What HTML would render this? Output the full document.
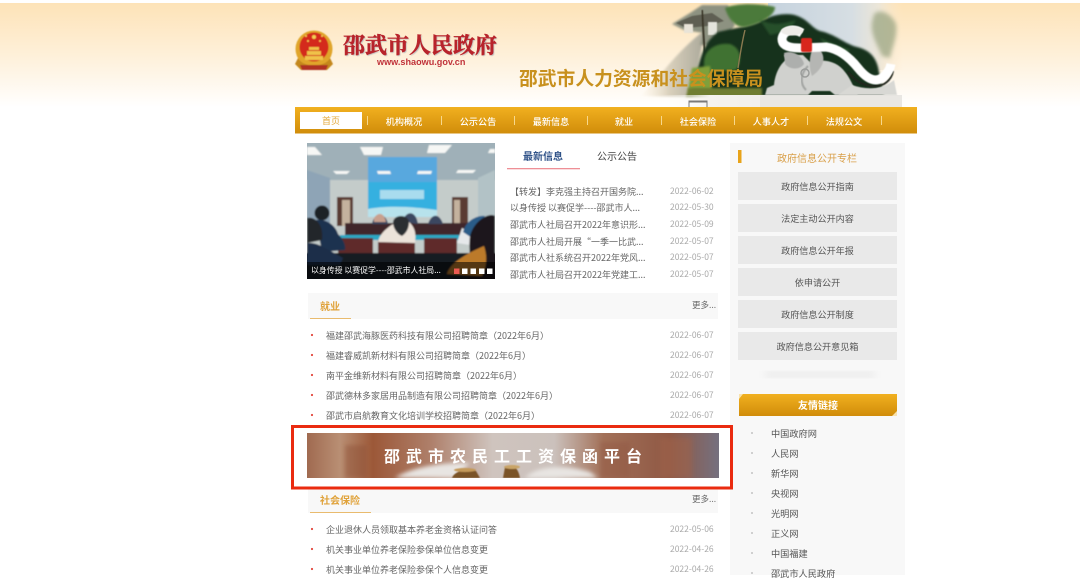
<!DOCTYPE html>
<html lang="zh-CN">
<head>
<meta charset="utf-8">
<title>邵武市人力资源和社会保障局</title>
<style>
html,body{margin:0;padding:0;background:#fff}
body{width:1080px;height:575px;overflow:hidden;position:relative;font-family:"Liberation Sans","Noto Sans CJK SC",sans-serif;color:#666;filter:blur(.3px)}
.t{position:absolute;white-space:nowrap;line-height:12px;font-size:9px;font-family:"Noto Sans CJK SC","Liberation Sans",sans-serif}
.l{margin-top:1px}
.c{transform:translateX(-50%)}
.d{color:#aaa;font-size:8.5px;left:670px}
.n{color:#fff;font-size:9.1px;font-weight:500}
.g{color:#555;font-size:9.2px}
.b{position:absolute;left:738px;width:159px;height:28px;background:#e9e9e9;line-height:28px;text-align:center;font-size:9.1px;color:#555;font-family:"Noto Sans CJK SC",sans-serif}
svg{position:absolute;left:0;top:0}
</style>
</head>
<body>
<svg width="1080" height="575" viewBox="0 0 1080 575">
<defs>
<linearGradient id="hd" x1="0" y1="0" x2="0" y2="1"><stop offset="0" stop-color="#fde3b8"/><stop offset=".5" stop-color="#fef0d9"/><stop offset="1" stop-color="#fff"/></linearGradient>
<linearGradient id="nav" x1="0" y1="0" x2="0" y2="1"><stop offset="0" stop-color="#f1b01f"/><stop offset="1" stop-color="#d08c0a"/></linearGradient>
<linearGradient id="sky" x1="0" y1="0" x2="1" y2="0"><stop offset="0" stop-color="#c6d3de"/><stop offset=".62" stop-color="#d6dee3"/><stop offset=".82" stop-color="#ece6d8"/><stop offset="1" stop-color="#fde8c8" stop-opacity="0"/></linearGradient>
<linearGradient id="stp" x1="0" y1="0" x2="1" y2="0"><stop offset="0" stop-color="#f6e6cc" stop-opacity="0"/><stop offset=".45" stop-color="#d9d0bc"/><stop offset="1" stop-color="#aaa89a"/></linearGradient>
<linearGradient id="pl" x1="0" y1="0" x2="1" y2="0"><stop offset="0" stop-color="#fff" stop-opacity="0"/><stop offset=".2" stop-color="#f5f3ef"/><stop offset=".9" stop-color="#ebe9e5"/><stop offset="1" stop-color="#fff" stop-opacity="0"/></linearGradient>
<linearGradient id="ban" x1="0" y1="0" x2="1" y2="0">
<stop offset="0" stop-color="#a06a50"/><stop offset=".08" stop-color="#b98f74"/><stop offset=".16" stop-color="#9c5838"/><stop offset=".3" stop-color="#ae7f6a"/><stop offset=".45" stop-color="#cfc4be"/><stop offset=".6" stop-color="#cbc1bc"/><stop offset=".72" stop-color="#a27058"/><stop offset=".88" stop-color="#8f5844"/><stop offset="1" stop-color="#75707f"/></linearGradient>
<filter id="bl" x="-20%" y="-20%" width="140%" height="140%"><feGaussianBlur stdDeviation="1"/></filter>
<filter id="bl2" x="-30%" y="-30%" width="160%" height="160%"><feGaussianBlur stdDeviation="2.2"/></filter>
<filter id="bl3" x="-30%" y="-30%" width="160%" height="160%"><feGaussianBlur stdDeviation="4"/></filter>
<filter id="bs" x="-10%" y="-10%" width="120%" height="120%"><feGaussianBlur stdDeviation=".5"/></filter>
<filter id="bm" x="-10%" y="-10%" width="120%" height="120%"><feGaussianBlur stdDeviation=".7"/></filter>
<clipPath id="hc"><rect x="630" y="3" width="290" height="104"/></clipPath>
<clipPath id="pc"><rect x="307" y="143" width="188" height="136"/></clipPath>
<clipPath id="bc"><rect x="307" y="433" width="412" height="45"/></clipPath>
</defs>
<rect x="0" y="3" width="1080" height="104" fill="url(#hd)"/>

<!-- header scene -->
<g clip-path="url(#hc)">
<rect x="768" y="-10" width="135" height="80" fill="url(#sky)"/>
<path d="M640 96C655 84 675 52 705 30L692 97Z" fill="url(#stp)" filter="url(#bl)"/>
<path d="M672 24L690 13L702 5H728L735 25L722 45H700L703 33L684 30Z" fill="#8d9281" filter="url(#bl)"/>
<path d="M676 23L692 16L712 13L724 21L708 26L686 28Z" fill="#5f5f52" filter="url(#bs)"/>
<rect x="684" y="24" width="9" height="9" fill="#e9e4d8" filter="url(#bs)"/>
<rect x="708" y="22" width="9" height="13" fill="#e4e4dc" filter="url(#bs)"/>
<path d="M702 10L705 58" stroke="#3b382c" stroke-width="2" fill="none" filter="url(#bs)"/>
<!-- tree masses -->
<path d="M718 32C735 28 752 26 762 20C775 14 790 12 800 17C810 22 812 28 820 31C835 34 845 44 857 47C870 50 877 58 879 72L884 96H690L700 60C704 46 710 38 718 32Z" fill="#14331c" filter="url(#bl)"/>
<path d="M725 8C735 3 760 3 775 7C775 16 760 24 745 27C735 28 728 18 725 8Z" fill="#4c7a3b" filter="url(#bl)"/>
<path d="M704 62C704 50 716 42 730 44C742 48 742 62 736 70L704 72Z" fill="#3f7230" filter="url(#bl)"/>
<path d="M745 30C742 42 740 55 738 68" stroke="#8a7a50" stroke-width="1.4" fill="none"/>
<path d="M692 68L710 66L712 90H688Z" fill="#7fa03a" filter="url(#bl)"/>
<path d="M688 88H762V97H686Z" fill="#6f7e33" filter="url(#bl)"/>
<path d="M760 20C772 25 780 25 796 20L790 30L770 35Z" fill="#27502c" filter="url(#bl)"/>
<path d="M820 38C832 44 840 46 850 50L842 55L826 46Z" fill="#2e5a30" filter="url(#bl)"/>
<path d="M874 14C880 8 892 14 896 24C898 36 892 48 890 58L882 56C878 46 870 34 872 22Z" fill="#9ba683" opacity=".75" filter="url(#bl2)"/>
<!-- plinth -->
<rect x="660" y="95" width="248" height="12" fill="url(#pl)"/>
<rect x="760" y="95" width="142" height="12" fill="#e9e7e3"/>
<!-- statue -->
<path d="M765 95L767 88L774 85C775 74 780 64 786 60L784 55L803 55L810 62C825 58 838 62 845 72C850 78 852 84 858 95H835L830 91H812L808 95H790Z" fill="#d0d1ce" filter="url(#bs)"/>
<path d="M838 95L852 85C866 90 882 90 894 80L897 95Z" fill="#d8d8d4" filter="url(#bs)"/>
<path d="M784 53C792 50 802 55 804 64C800 70 790 70 785 64Z" fill="#adafad" filter="url(#bs)"/>
<path d="M808 66C800 74 800 84 806 90" stroke="#a3a5a3" stroke-width="2" fill="none" filter="url(#bs)"/>
<path d="M818 48C826 55 826 66 812 76C808 66 810 56 812 50Z" fill="#b5b6b3" filter="url(#bs)"/>
<circle cx="805" cy="73" r="4" fill="none" stroke="#9b9d9b" stroke-width="1.500"/>
<path d="M848 72C858 85 872 89 884 84C889 81 892 77 893 71" stroke="#20261f" stroke-width="2" fill="none" filter="url(#bs)"/>
<path d="M802 33C792 27 783 31 782 39C782 46 790 48 800 48L826 47C840 49 850 58 858 68C866 78 874 83 882 78C887 74 890 70 891 64" stroke="#fff" stroke-width="9" fill="none" filter="url(#bs)"/>
<ellipse cx="792" cy="31" rx="11" ry="4.500" fill="#eeece8" filter="url(#bs)"/>
<rect x="801" y="38" width="11" height="14" rx="2" fill="#d8281e" filter="url(#bs)"/>
</g>
<path d="M689 107V101H707V107M689 102H707" stroke="#444" stroke-width="1" fill="none" opacity=".7"/>

<!-- nav -->
<rect x="295" y="107" width="622" height="26.500" fill="url(#nav)"/>
<rect x="300" y="112" width="62" height="17" fill="#fff"/>
<g fill="#f8d88c"><rect x="367" y="116" width="1" height="9"/><rect x="441" y="116" width="1" height="9"/><rect x="514" y="116" width="1" height="9"/><rect x="587" y="116" width="1" height="9"/><rect x="661" y="116" width="1" height="9"/><rect x="734" y="116" width="1" height="9"/><rect x="807" y="116" width="1" height="9"/><rect x="881" y="116" width="1" height="9"/></g>

<!-- emblem -->
<g filter="url(#bs)">
<circle cx="314" cy="49" r="18.500" fill="#e0a52c"/>
<circle cx="314" cy="47" r="14.500" fill="#d42a1c"/>
<path d="M298 58C303 68 325 68 330 58L333 64L327 70H301L295 64Z" fill="#c4881f"/>
<path d="M300 65H328L326 70H302Z" fill="#b03022"/>
<path d="M305 56H323V60H305ZM307 51H321V55H307ZM309 47H319V50H309Z" fill="#f0c24a"/>
<circle cx="314" cy="37" r="2" fill="#f3cf55"/><circle cx="308" cy="41" r="1" fill="#f3cf55"/><circle cx="320" cy="41" r="1" fill="#f3cf55"/><circle cx="306" cy="36" r="1" fill="#f3cf55"/><circle cx="322" cy="36" r="1" fill="#f3cf55"/>
</g>

<!-- photo -->
<g clip-path="url(#pc)">
<g filter="url(#bm)">
<rect x="300" y="136" width="202" height="150" fill="#c4ccca"/>
<rect x="300" y="136" width="202" height="44" fill="#9fb0b8"/>
<path d="M368 157H437V183H368Z" fill="#58a8de"/>
<path d="M307 170L330 178V226H307Z" fill="#8ea4b6"/>
<path d="M495 170L478 178V226H495Z" fill="#b2c2c6"/>
<path d="M307 147H315L322 155H307ZM360 147H383L381 155H364ZM429 145H452L445 153H427ZM333 171H350L347 174H336ZM377 171H390L391 174H378ZM418 171H432L431 174H417ZM458 170H476L473 173H456ZM490 149H495V153H488Z" fill="#f6f7f5"/>
<rect x="368" y="182" width="69" height="35" fill="#34b0e0"/>
<rect x="380" y="190" width="44" height="9" fill="#a9dcee"/>
<path d="M368 209C390 205 415 207 437 210V217H368Z" fill="#b7e2ec"/>
<rect x="337" y="197" width="16" height="29" fill="#5a3a30"/><rect x="342" y="200" width="8" height="26" fill="#c4b29e"/>
<rect x="452" y="197" width="16" height="29" fill="#5a3a30"/><rect x="454" y="200" width="6" height="26" fill="#c4b29e"/>
<rect x="345" y="223" width="125" height="12" fill="#3f2729"/>
<path d="M372 224C374 212 386 212 388 224ZM402 222C406 210 416 210 418 224ZM428 224C432 212 440 214 443 224Z" fill="#3b4660"/>
<path d="M374 218C378 212 384 212 386 222H374Z" fill="#c8a08e"/>
<rect x="340" y="235" width="125" height="5" fill="#2ba8c4"/>
<rect x="338" y="238" width="35" height="16" fill="#5e2a2c"/><rect x="378" y="240" width="37" height="14" fill="#5e2a2c"/><rect x="424" y="238" width="33" height="16" fill="#5e2a2c"/>
<rect x="300" y="253" width="202" height="30" fill="#161a22"/>
<path d="M378 242C380 232 390 226 396 222L409 222C416 228 416 236 415 243Z" fill="#ece3da"/>
<path d="M393 222C394 214 408 214 409 222C409 230 405 234 402 236C397 234 393 228 393 222Z" fill="#2b2d33"/>
<circle cx="322" cy="213" r="7.500" fill="#1c2028"/>
<path d="M316 220C326 218 336 226 338 234C344 240 346 246 345 250L322 252Z" fill="#1f3350"/>
<path d="M307 218C316 216 324 226 322 240L307 243Z" fill="#22252b"/>
<path d="M307 243C318 242 328 250 343 258L340 265H307Z" fill="#1f2e4a"/>
<path d="M457 243L462 228L470 232L470 245Z" fill="#e6e8ea"/>
<path d="M463 232C466 220 478 215 485 216L472 238Z" fill="#2a5c88"/>
<path d="M470 236C474 220 490 212 495 216V279H468C472 262 468 250 470 236Z" fill="#1f181b"/>
<path d="M447 274C450 262 470 252 484 246C488 258 486 268 482 276Z" fill="#bc7a2c"/>
</g>
<rect x="307" y="262" width="188" height="17" fill="#000" opacity=".55"/>
</g>
<rect x="454" y="268.500" width="5.500" height="5.500" fill="#ec5a52"/><g fill="#fff"><rect x="462" y="268.500" width="5.500" height="5.500"/><rect x="470.500" y="268.500" width="5.500" height="5.500"/><rect x="479" y="268.500" width="5.500" height="5.500"/><rect x="487" y="268.500" width="5.500" height="5.500"/></g>

<!-- tab underline -->
<rect x="507" y="168" width="73" height="1.300" fill="#ee8f96"/>

<!-- section headers -->
<rect x="308" y="293" width="410" height="26" fill="#f8f8f8"/>
<rect x="310" y="318" width="41" height="1" fill="#e9bb6e"/>
<rect x="308" y="489" width="410" height="24" fill="#f8f8f8"/>
<rect x="310" y="512" width="61" height="1" fill="#e9bb6e"/>
<g fill="#e2483e"><circle cx="312" cy="335" r="1.100"/><circle cx="312" cy="355" r="1.100"/><circle cx="312" cy="375" r="1.100"/><circle cx="312" cy="395" r="1.100"/><circle cx="312" cy="415" r="1.100"/><circle cx="312" cy="529" r="1.100"/><circle cx="312" cy="549" r="1.100"/><circle cx="312" cy="569" r="1.100"/></g>

<!-- right panel -->
<rect x="730" y="143" width="175" height="432" fill="#f8f8f8"/>
<rect x="738" y="150" width="3.500" height="13" fill="#e8a31a"/>
<rect x="765" y="372" width="110" height="5" fill="#e6e6e6" filter="url(#bl3)"/>
<rect x="739" y="394" width="158" height="22" fill="url(#nav)"/>
<path d="M739 394H743L739 399ZM897 416H892L897 411Z" fill="#f8e2ae"/>
<g fill="#c4c4c4"><circle cx="752" cy="433" r="1"/><circle cx="752" cy="453" r="1"/><circle cx="752" cy="473" r="1"/><circle cx="752" cy="493" r="1"/><circle cx="752" cy="513" r="1"/><circle cx="752" cy="533" r="1"/><circle cx="752" cy="553" r="1"/><circle cx="752" cy="573" r="1"/></g>

<!-- banner -->
<rect x="292.500" y="426.500" width="439" height="61.500" fill="#fff" stroke="#ea2b10" stroke-width="3"/>
<g clip-path="url(#bc)">
<rect x="307" y="433" width="412" height="45" fill="url(#ban)"/>
<g filter="url(#bl2)">
<rect x="345" y="445" width="22" height="33" fill="#8c4f38" opacity=".45"/>
<rect x="600" y="442" width="30" height="36" fill="#8f5540" opacity=".4"/>
<rect x="660" y="438" width="32" height="40" fill="#a0634a" opacity=".5"/>
<path d="M395 478C410 468 440 462 470 463L455 478ZM525 478C535 466 565 464 590 472L598 478Z" fill="#e8e5e2"/>
</g>
<g filter="url(#bs)">
<path d="M452 478C455 470 468 469 476 471L480 478ZM503 478L505 467C510 464 518 465 520 478Z" fill="#7a5228"/>
<ellipse cx="465" cy="470" rx="11" ry="2" fill="#c49a5a"/><ellipse cx="512" cy="467" rx="8" ry="2" fill="#c9a468"/>
</g>
</g>
</svg>

<div class="t" style="left:343px;top:32px;font-size:22px;line-height:26px;font-weight:700;color:#b8232b;font-family:'Noto Serif CJK SC','Noto Sans CJK SC',serif;-webkit-text-stroke:.5px #b8232b;text-shadow:1px 1px 1px #bbb">邵武市人民政府</div>
<div class="t" style="left:377px;top:56px;font-size:9.100px;line-height:12px;font-weight:700;color:#c0323a;font-family:'Liberation Sans',sans-serif">www.shaowu.gov.cn</div>
<div class="t" style="left:519px;top:65px;font-size:18.800px;line-height:26px;font-weight:700;color:#c8911e">邵武市人力资源和社会保障局</div>

<div class="t c" style="left:331px;top:115px;color:#e3a83a">首页</div>
<div class="t c n" style="left:404px;top:115px">机构概况</div>
<div class="t c n" style="left:478px;top:115px">公示公告</div>
<div class="t c n" style="left:551px;top:115px">最新信息</div>
<div class="t c n" style="left:624px;top:115px">就业</div>
<div class="t c n" style="left:698px;top:115px">社会保险</div>
<div class="t c n" style="left:771px;top:115px">人事人才</div>
<div class="t c n" style="left:844px;top:115px">法规公文</div>

<div class="t" style="left:311px;top:265px;color:#fff;font-size:7.900px">以身传授 以赛促学----邵武市人社局...</div>

<div class="t" style="left:523px;top:150px;font-size:10px;font-weight:700;color:#2f5288">最新信息</div>
<div class="t" style="left:597px;top:150px;font-size:10px;color:#444">公示公告</div>

<div class="t l" style="left:510px;top:185px">【转发】李克强主持召开国务院...</div><div class="t d" style="top:185px">2022-06-02</div>
<div class="t l" style="left:510px;top:201px">以身传授 以赛促学----邵武市人...</div><div class="t d" style="top:201px">2022-05-30</div>
<div class="t l" style="left:510px;top:218px">邵武市人社局召开2022年意识形...</div><div class="t d" style="top:218px">2022-05-09</div>
<div class="t l" style="left:510px;top:235px">邵武市人社局开展“一季一比武...</div><div class="t d" style="top:235px">2022-05-07</div>
<div class="t l" style="left:510px;top:251px">邵武市人社系统召开2022年党风...</div><div class="t d" style="top:251px">2022-05-07</div>
<div class="t l" style="left:510px;top:268px">邵武市人社局召开2022年党建工...</div><div class="t d" style="top:268px">2022-05-07</div>

<div class="t" style="left:320px;top:300px;font-size:10px;font-weight:700;color:#e0a23a">就业</div>
<div class="t" style="left:692px;top:299px;font-size:8.500px;color:#666">更多...</div>
<div class="t l" style="left:326px;top:329px">福建邵武海豚医药科技有限公司招聘简章（2022年6月）</div><div class="t d" style="top:329px">2022-06-07</div>
<div class="t l" style="left:326px;top:349px">福建睿威凯新材料有限公司招聘简章（2022年6月）</div><div class="t d" style="top:349px">2022-06-07</div>
<div class="t l" style="left:326px;top:369px">南平金维新材料有限公司招聘简章（2022年6月）</div><div class="t d" style="top:369px">2022-06-07</div>
<div class="t l" style="left:326px;top:389px">邵武德林多家居用品制造有限公司招聘简章（2022年6月）</div><div class="t d" style="top:389px">2022-06-07</div>
<div class="t l" style="left:326px;top:409px">邵武市启航教育文化培训学校招聘简章（2022年6月）</div><div class="t d" style="top:409px">2022-06-07</div>

<div class="t" style="left:384px;top:444px;font-size:16px;line-height:22px;font-weight:700;color:#fff;letter-spacing:6px">邵武市农民工工资保函平台</div>

<div class="t" style="left:320px;top:494px;font-size:10px;font-weight:700;color:#e0a23a">社会保险</div>
<div class="t" style="left:692px;top:493px;font-size:8.500px;color:#666">更多...</div>
<div class="t l" style="left:326px;top:523px">企业退休人员领取基本养老金资格认证问答</div><div class="t d" style="top:523px">2022-05-06</div>
<div class="t l" style="left:326px;top:543px">机关事业单位养老保险参保单位信息变更</div><div class="t d" style="top:543px">2022-04-26</div>
<div class="t l" style="left:326px;top:563px">机关事业单位养老保险参保个人信息变更</div><div class="t d" style="top:563px">2022-04-26</div>

<div class="t c" style="left:817px;top:152px;font-size:10px;color:#d9a04a">政府信息公开专栏</div>
<div class="b" style="top:172px">政府信息公开指南</div>
<div class="b" style="top:204px">法定主动公开内容</div>
<div class="b" style="top:236px">政府信息公开年报</div>
<div class="b" style="top:268px">依申请公开</div>
<div class="b" style="top:300px">政府信息公开制度</div>
<div class="b" style="top:332px">政府信息公开意见箱</div>

<div class="t c" style="left:818px;top:399px;font-size:10px;font-weight:700;color:#fff">友情链接</div>
<div class="t g" style="left:771px;top:427px">中国政府网</div>
<div class="t g" style="left:771px;top:447px">人民网</div>
<div class="t g" style="left:771px;top:467px">新华网</div>
<div class="t g" style="left:771px;top:487px">央视网</div>
<div class="t g" style="left:771px;top:507px">光明网</div>
<div class="t g" style="left:771px;top:527px">正义网</div>
<div class="t g" style="left:771px;top:547px">中国福建</div>
<div class="t g" style="left:771px;top:567px">邵武市人民政府</div>
</body>
</html>
